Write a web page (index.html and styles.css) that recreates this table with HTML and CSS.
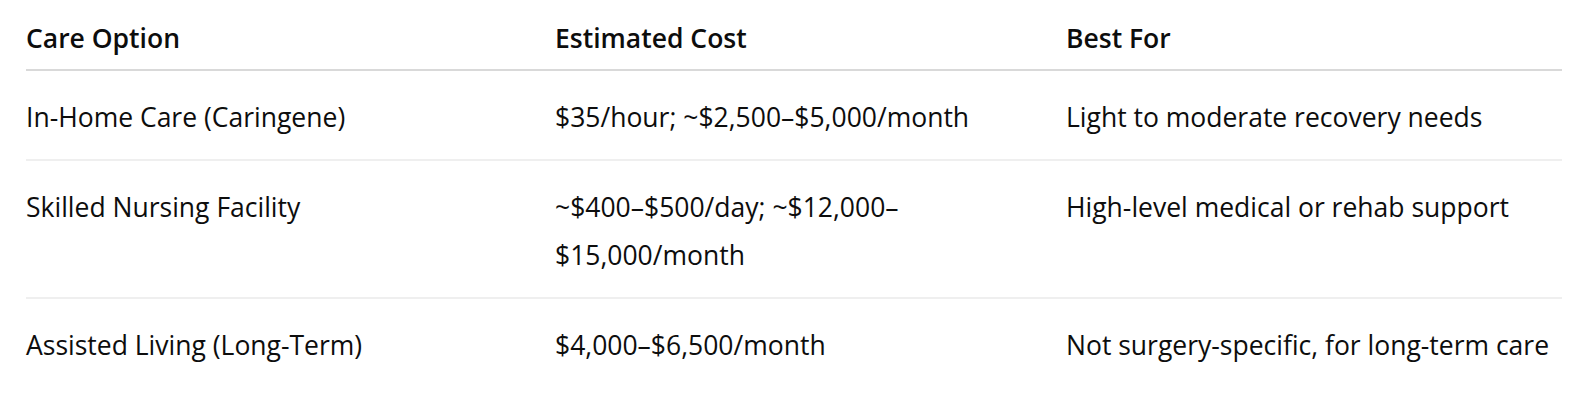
FILE: index.html
```html
<!DOCTYPE html>
<html lang="en">
<head>
<meta charset="utf-8">
<title>Care Options</title>
<link rel="stylesheet" href="styles.css">
</head>
<body>
<div class="wrap">
  <table class="care-table">
    <colgroup>
      <col class="c1">
      <col class="c2">
      <col class="c3">
    </colgroup>
    <thead>
      <tr>
        <th>Care Option</th>
        <th>Estimated Cost</th>
        <th>Best For</th>
      </tr>
    </thead>
    <tbody>
      <tr>
        <td>In-Home Care (Caringene)</td>
        <td>$35/hour; ~$2,500–$5,000/month</td>
        <td>Light to moderate recovery needs</td>
      </tr>
      <tr>
        <td>Skilled Nursing Facility</td>
        <td>~$400–$500/day; ~$12,000–$15,000/month</td>
        <td>High-level medical or rehab support</td>
      </tr>
      <tr>
        <td>Assisted Living (Long-Term)</td>
        <td>$4,000–$6,500/month</td>
        <td>Not surgery-specific, for long-term care</td>
      </tr>
    </tbody>
  </table>
</div>
</body>
</html>
```

FILE: styles.css
```css
html, body {
  margin: 0;
  padding: 0;
  background: #ffffff;
}

body {
  font-family: "Open Sans", "Noto Sans", "Liberation Sans", sans-serif;
  color: #0d0d0d;
  font-size: 26.5px;
  line-height: 48px;
}

.wrap {
  padding: 0 28px 0 26px;
}

.care-table {
  width: 1536px;
  border-collapse: collapse;
  table-layout: fixed;
}

.c1 { width: 529px; }
.c2 { width: 511px; }
.c3 { width: 496px; }

.care-table th {
  text-align: left;
  font-weight: 600;
  padding: 14px 20px 7px 0;
  border-bottom: 2px solid #d9d9d9;
  vertical-align: middle;
}

.care-table td {
  text-align: left;
  font-weight: 400;
  padding: 22px 20px 18px 0;
  border-bottom: 2px solid #efefef;
  vertical-align: top;
}

.care-table th:last-child,
.care-table td:last-child {
  padding-right: 0;
}

.care-table tbody tr:last-child td {
  border-bottom: none;
}
```
